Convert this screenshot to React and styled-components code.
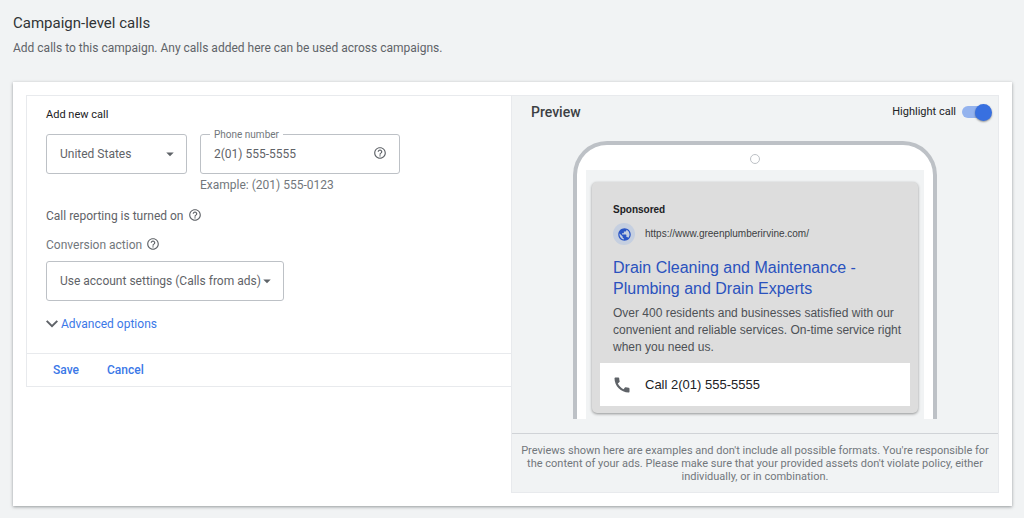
import { useState } from "react";
import styled, { createGlobalStyle } from "styled-components";
import { MdArrowDropDown, MdCall, MdHelpOutline, MdPublic } from "react-icons/md";

const GlobalStyle = createGlobalStyle`
  * {
    box-sizing: border-box;
  }
  body {
    margin: 0;
    background-color: #f1f3f4;
    color: #3c4043;
    font-family: Roboto, "Liberation Sans", sans-serif;
    font-size: 12px;
    line-height: 16px;
  }
  button, input, select {
    font-family: inherit;
    font-size: inherit;
    color: inherit;
  }
`;

const Page = styled.main`
  padding: 12px 12px 12px 13px;
`;

const Title = styled.h1`
  margin: 0;
  font-size: 15px;
  font-weight: 400;
  line-height: 22px;
  color: #303336;
`;

const Subtitle = styled.p`
  margin: 6px 0 26px;
  color: #5f6368;
`;

const Card = styled.section`
  display: grid;
  grid-template-columns: minmax(0, 1fr) 488px;
  align-items: start;
  padding: 13px;
  background-color: white;
  box-shadow: 0 1px 3px rgba(60, 64, 67, 0.5);
`;

const Form = styled.form`
  border: 1px solid #e8eaed;
  border-right: none;
`;

const Fields = styled.div`
  padding: 11px 19px 21px;
`;

const FormTitle = styled.h2`
  margin: 0 0 11px;
  font-size: 11px;
  font-weight: 400;
  line-height: 16px;
  color: #202124;
`;

const FieldRow = styled.div`
  display: flex;
  gap: 13px;
`;

const SelectBox = styled.div`
  position: relative;
  width: ${(props) => props.$width};
  svg {
    position: absolute;
    top: 11px;
    right: 8px;
    color: #5f6368;
    pointer-events: none;
  }
`;

const Select = styled.select`
  display: block;
  appearance: none;
  width: 100%;
  height: 40px;
  padding: 0 18px 0 13px;
  border: 1px solid #bdc1c6;
  border-radius: 3px;
  background-color: white;
  color: #5f6368;
`;

const PhoneField = styled.div`
  position: relative;
  width: 200px;
  svg {
    position: absolute;
    top: 12px;
    right: 13px;
    color: #5f6368;
  }
`;

const FloatingLabel = styled.label`
  position: absolute;
  top: -7px;
  left: 10px;
  padding: 0 4px;
  background-color: white;
  font-size: 10px;
  color: #72777c;
`;

const Input = styled.input`
  display: block;
  width: 100%;
  height: 40px;
  padding: 0 40px 0 13px;
  border: 1px solid #bdc1c6;
  border-radius: 3px;
  color: #5f6368;
`;

const Hint = styled.p`
  margin: 3px 0 15px;
  color: #72777c;
`;

const Line = styled.div`
  display: flex;
  gap: ${(props) => props.$gap};
  margin-bottom: ${(props) => props.$space};
  color: ${(props) => props.$color};
  svg {
    color: #5f6368;
  }
`;

const LinkButton = styled.button`
  display: flex;
  align-items: center;
  gap: 3px;
  margin-top: 15px;
  padding: 0;
  border: none;
  background: none;
  line-height: 16px;
  color: #3b78e7;
  cursor: pointer;
`;

const Actions = styled.div`
  display: flex;
  gap: 28px;
  padding: 8px 26px;
  border-top: 1px solid #e8eaed;
`;

const ActionButton = styled.button`
  padding: 0;
  border: none;
  background: none;
  font-weight: 500;
  line-height: 16px;
  color: #3b78e7;
  cursor: pointer;
`;

const Preview = styled.aside`
  border: 1px solid #e8eaed;
  background-color: #f1f3f4;
`;

const PreviewHeader = styled.header`
  display: flex;
  justify-content: space-between;
  align-items: center;
  height: 32px;
  margin-bottom: 13px;
  padding: 0 6px 0 19px;
`;

const PreviewTitle = styled.h2`
  margin: 0;
  font-size: 14px;
  font-weight: 500;
  color: #3c4043;
`;

const ToggleLabel = styled.label`
  display: flex;
  align-items: center;
  gap: 6px;
  font-size: 11px;
  color: #202124;
`;

const Toggle = styled.input`
  appearance: none;
  display: flex;
  align-items: center;
  width: 30px;
  height: 17px;
  margin: 0;
  cursor: pointer;
  &::before {
    content: "";
    width: 26px;
    height: 12px;
    border-radius: 6px;
    background-color: #bdc1c6;
  }
  &::after {
    content: "";
    width: 17px;
    height: 17px;
    margin-left: -26px;
    border-radius: 50%;
    background-color: white;
    box-shadow: 0 1px 2px rgba(0, 0, 0, 0.4);
  }
  &:checked::before {
    background-color: #94b3ee;
  }
  &:checked::after {
    margin-left: -13px;
    background-color: #3870e0;
  }
`;

const Phone = styled.div`
  width: 364px;
  margin: 0 auto 14px;
  padding: 0 9px;
  border: 4px solid #bdc1c6;
  border-bottom: none;
  border-radius: 34px 34px 0 0;
  background-color: white;
`;

const Camera = styled.div`
  width: 10px;
  height: 10px;
  margin: 0 auto;
  border: 1px solid #bdc1c6;
  border-radius: 50%;
`;

const Speaker = styled.div`
  padding: 9px 0 6px;
`;

const Screen = styled.div`
  padding: 12px 6px 6px;
  background-color: #f1f3f4;
`;

const Ad = styled.article`
  padding: 20px 8px 7px;
  border-radius: 5px;
  background-color: #dddddd;
  box-shadow: 0 1px 3px rgba(0, 0, 0, 0.4);
  font-family: "Liberation Sans", Arial, sans-serif;
`;

const AdText = styled.div`
  padding: 0 4px 7px 13px;
`;

const Sponsored = styled.strong`
  display: block;
  font-size: 10px;
  color: #202124;
`;

const Site = styled.div`
  display: flex;
  align-items: center;
  gap: 10px;
  margin: 5px 0 12px;
  font-size: 10px;
`;

const Favicon = styled.span`
  display: flex;
  align-items: center;
  justify-content: center;
  width: 22px;
  height: 22px;
  border-radius: 50%;
  background-color: #c5cfe0;
  color: #2b56c5;
`;

const Headline = styled.h3`
  margin: 0 0 6px;
  font-size: 16px;
  font-weight: 400;
  line-height: 21px;
  color: #2a52be;
`;

const Description = styled.p`
  margin: 0;
  font-size: 12px;
  line-height: 17px;
  color: #4d5156;
`;

const CallRow = styled.a`
  display: flex;
  align-items: center;
  gap: 13px;
  height: 43px;
  padding: 0 12px;
  background-color: white;
  font-size: 13px;
  color: #202124;
  text-decoration: none;
  svg {
    color: #5f6368;
  }
`;

const Disclaimer = styled.p`
  margin: 0;
  padding: 10px 8px 9px;
  border-top: 1px solid #d0d3d7;
  font-size: 11px;
  line-height: 13px;
  text-align: center;
  color: #72777c;
`;

const App = () => {
  const [phone, setPhone] = useState("2(01) 555-5555");
  const [highlight, setHighlight] = useState(true);

  return (
    <>
      <GlobalStyle />
      <Page>
        <Title>Campaign-level calls</Title>
        <Subtitle>Add calls to this campaign. Any calls added here can be used across campaigns.</Subtitle>
        <Card>
          <Form onSubmit={(e) => e.preventDefault()}>
            <Fields>
              <FormTitle>Add new call</FormTitle>
              <FieldRow>
                <SelectBox $width="141px">
                  <Select aria-label="Country">
                    <option>United States</option>
                  </Select>
                  <MdArrowDropDown size={18} />
                </SelectBox>
                <div>
                  <PhoneField>
                    <Input id="phone" value={phone} onChange={(e) => setPhone(e.target.value)} />
                    <FloatingLabel htmlFor="phone">Phone number</FloatingLabel>
                    <MdHelpOutline size={14} />
                  </PhoneField>
                  <Hint>Example: (201) 555-0123</Hint>
                </div>
              </FieldRow>
              <Line $gap="4px" $space="13px" $color="#5f6368">
                Call reporting is turned on
                <MdHelpOutline size={14} />
              </Line>
              <Line $gap="4px" $space="8px" $color="#72777c">
                <label htmlFor="conversion">Conversion action</label>
                <MdHelpOutline size={14} />
              </Line>
              <SelectBox $width="238px">
                <Select id="conversion">
                  <option>Use account settings (Calls from ads)</option>
                </Select>
                <MdArrowDropDown size={18} />
              </SelectBox>
              <LinkButton type="button">
                <svg width="12" height="8" viewBox="0 0 12 8" fill="none" stroke="#5f6368" strokeWidth="2">
                  <path d="M.7.9 6 6.2 11.3.9" />
                </svg>
                Advanced options
              </LinkButton>
            </Fields>
            <Actions>
              <ActionButton type="submit">Save</ActionButton>
              <ActionButton type="button">Cancel</ActionButton>
            </Actions>
          </Form>
          <Preview>
            <PreviewHeader>
              <PreviewTitle>Preview</PreviewTitle>
              <ToggleLabel>
                Highlight call
                <Toggle type="checkbox" checked={highlight} onChange={(e) => setHighlight(e.target.checked)} />
              </ToggleLabel>
            </PreviewHeader>
            <Phone>
              <Speaker>
                <Camera />
              </Speaker>
              <Screen>
                <Ad>
                  <AdText>
                    <Sponsored>Sponsored</Sponsored>
                    <Site>
                      <Favicon>
                        <MdPublic size={15} />
                      </Favicon>
                      https://www.greenplumberirvine.com/
                    </Site>
                    <Headline>Drain Cleaning and Maintenance - Plumbing and Drain Experts</Headline>
                    <Description>
                      Over 400 residents and businesses satisfied with our convenient and reliable services. On-time
                      service right when you need us.
                    </Description>
                  </AdText>
                  <CallRow href="#call">
                    <MdCall size={20} />
                    Call {phone}
                  </CallRow>
                </Ad>
              </Screen>
            </Phone>
            <Disclaimer>
              Previews shown here are examples and don't include all possible formats. You're responsible for the
              content of your ads. Please make sure that your provided assets don't violate policy, either individually,
              or in combination.
            </Disclaimer>
          </Preview>
        </Card>
      </Page>
    </>
  );
};

export default App;
